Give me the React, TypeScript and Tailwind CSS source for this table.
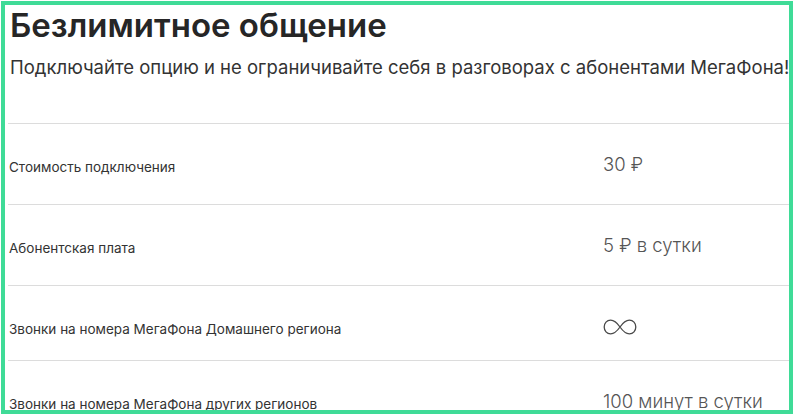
import React from 'react';

interface Row {
  label: string;
  value: React.ReactNode;
  height: string;
}

const Infinity: React.FC = () => (
  <svg width="34" height="16" viewBox="0 0 34 16" className="mt-[5px]">
    <path
      d="M17 8 C 13.5 3, 10.5 1.2, 7.6 1.2 C 3.8 1.2, 1.2 4.2, 1.2 8 C 1.2 11.8, 3.8 14.8, 7.6 14.8 C 10.5 14.8, 13.5 13, 17 8 C 20.5 3, 23.5 1.2, 26.4 1.2 C 30.2 1.2, 32.8 4.2, 32.8 8 C 32.8 11.8, 30.2 14.8, 26.4 14.8 C 23.5 14.8, 20.5 13, 17 8 Z"
      fill="none"
      stroke="#4a4a4a"
      strokeWidth="1.3"
    />
  </svg>
);

const rows: Row[] = [
  { label: 'Стоимость подключения', value: '30 ₽', height: 'h-[81px]' },
  { label: 'Абонентская плата', value: '5 ₽ в сутки', height: 'h-[81px]' },
  { label: 'Звонки на номера МегаФона Домашнего региона', value: <Infinity />, height: 'h-[75px]' },
  { label: 'Звонки на номера МегаФона других регионов', value: '100 минут в сутки', height: 'h-[88px]' },
];

export default function App() {
  return (
    <div className="w-[796px] h-[417px] bg-white overflow-hidden">
      <div
        className="ml-[1px] mt-[1px] w-[792px] h-[413px] border-4 border-[#3fdb97] overflow-hidden bg-white"
        style={{ fontFamily: 'Inter, "Noto Sans", sans-serif' }}
      >
        <h1 className="pl-[5px] pt-[1px] text-[33px] leading-[38px] font-semibold text-[#262626]">
          Безлимитное общение
        </h1>
        <p className="pl-[5px] mt-[11px] text-[18.5px] leading-[24px] text-[#333] whitespace-nowrap">
          Подключайте опцию и не ограничивайте себя в разговорах с абонентами МегаФона!
        </p>

        <div className="mt-[44px] ml-[3px]">
          {rows.map((row) => (
            <div key={row.label} className={`flex border-t border-[#dcdcdc] ${row.height}`}>
              <div className="w-[595px] pl-[1px] pt-[34px] text-[13.5px] leading-[18px] text-[#333]">
                {row.label}
              </div>
              <div className="pt-[28px] text-[18.5px] leading-[24px] font-light text-[#555]">
                {row.value}
              </div>
            </div>
          ))}
        </div>
      </div>
    </div>
  );
}
